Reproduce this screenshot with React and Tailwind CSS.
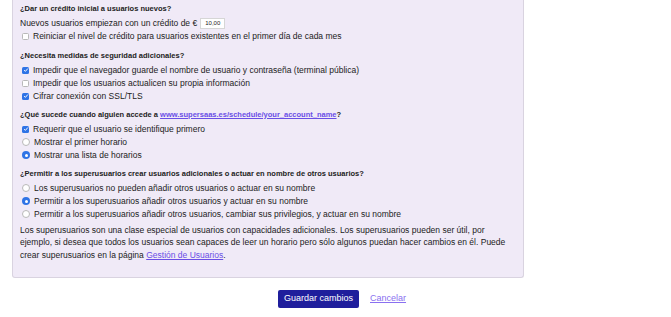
import React from 'react';

const font = { fontFamily: '"Liberation Sans", Arial, sans-serif' };

function Check({ on }) {
  if (on) {
    return (
      <span className="inline-flex h-[7px] w-[7px] shrink-0 items-center justify-center rounded-[1.5px] bg-[#2f74e6]">
        <svg viewBox="0 0 8 8" className="h-[6px] w-[6px]">
          <path d="M1.5 4.2 L3.2 5.8 L6.5 2" fill="none" stroke="#fff" strokeWidth="1.3" />
        </svg>
      </span>
    );
  }
  return <span className="inline-block h-[7px] w-[7px] shrink-0 rounded-[1.5px] border border-[#b9b9b9] bg-white" />;
}

function Radio({ on }) {
  if (on) {
    return (
      <span className="inline-flex h-[8px] w-[8px] shrink-0 items-center justify-center rounded-full bg-[#2f74e6]">
        <span className="h-[3px] w-[3px] rounded-full bg-white" />
      </span>
    );
  }
  return <span className="inline-block h-[8px] w-[8px] shrink-0 rounded-full border border-[#b9b9b9] bg-white" />;
}

function Option({ type = 'check', on = false, children }) {
  return (
    <div className="flex h-[13px] items-center gap-[4px] pl-[2px]">
      {type === 'check' ? <Check on={on} /> : <Radio on={on} />}
      <span>{children}</span>
    </div>
  );
}

function Heading({ children }) {
  return <div className="h-[13px] text-[7.5px] font-bold leading-[13px]">{children}</div>;
}

export default function App() {
  return (
    <div className="min-h-[317px] bg-white text-[#222]" style={font}>
      <div className="ml-[12px] w-[512px] rounded-b-[3px] border-x border-b border-[#d9d3e0] bg-[#f0eaf7] px-[7px] pb-[16px] pt-[1.5px] text-[8.5px] leading-[13px]">
        <Heading>¿Dar un crédito inicial a usuarios nuevos?</Heading>
        <div className="mt-[2px] flex h-[13px] items-center">
          <span>Nuevos usuarios empiezan con un crédito de €</span>
          <span className="ml-[3px] inline-flex h-[11px] w-[25px] items-center border border-[#d6d6d6] bg-white pl-[4px] text-[6px] leading-none">
            10,00
          </span>
        </div>
        <Option>Reiniciar el nivel de crédito para usuarios existentes en el primer día de cada mes</Option>

        <div className="mt-[6px]">
          <Heading>¿Necesita medidas de seguridad adicionales?</Heading>
          <div className="mt-[2px]">
            <Option on>Impedir que el navegador guarde el nombre de usuario y contraseña (terminal pública)</Option>
            <Option>Impedir que los usuarios actualicen su propia información</Option>
            <Option on>Cifrar conexión con SSL/TLS</Option>
          </div>
        </div>

        <div className="mt-[5px]">
          <Heading>
            ¿Qué sucede cuando alguien accede a{' '}
            <a href="#" className="text-[#6a4ee6] underline">www.supersaas.es/schedule/your_account_name</a>?
          </Heading>
          <div className="mt-[2px]">
            <Option on>Requerir que el usuario se identifique primero</Option>
            <Option type="radio">Mostrar el primer horario</Option>
            <Option type="radio" on>Mostrar una lista de horarios</Option>
          </div>
        </div>

        <div className="mt-[5px]">
          <Heading>¿Permitir a los superusuarios crear usuarios adicionales o actuar en nombre de otros usuarios?</Heading>
          <div className="mt-[2px]">
            <Option type="radio">Los superusuarios no pueden añadir otros usuarios o actuar en su nombre</Option>
            <Option type="radio" on>Permitir a los superusuarios añadir otros usuarios y actuar en su nombre</Option>
            <Option type="radio">Permitir a los superusuarios añadir otros usuarios, cambiar sus privilegios, y actuar en su nombre</Option>
          </div>
        </div>

        <p className="mt-[3px] leading-[12.5px]">
          Los superusuarios son una clase especial de usuarios con capacidades adicionales. Los superusuarios pueden ser útil, por
          ejemplo, si desea que todos los usuarios sean capaces de leer un horario pero sólo algunos puedan hacer cambios en él. Puede
          crear superusuarios en la página{' '}
          <a href="#" className="text-[#6a4ee6] underline">Gestión de Usuarios</a>.
        </p>
      </div>

      <div className="mt-[12px] flex items-center pl-[278px]">
        <button className="h-[18px] w-[81px] rounded-[2px] bg-[#1f1e9c] text-[9px] text-white">Guardar cambios</button>
        <a href="#" className="ml-[11px] text-[9px] text-[#8a70f0] underline">Cancelar</a>
      </div>
    </div>
  );
}
